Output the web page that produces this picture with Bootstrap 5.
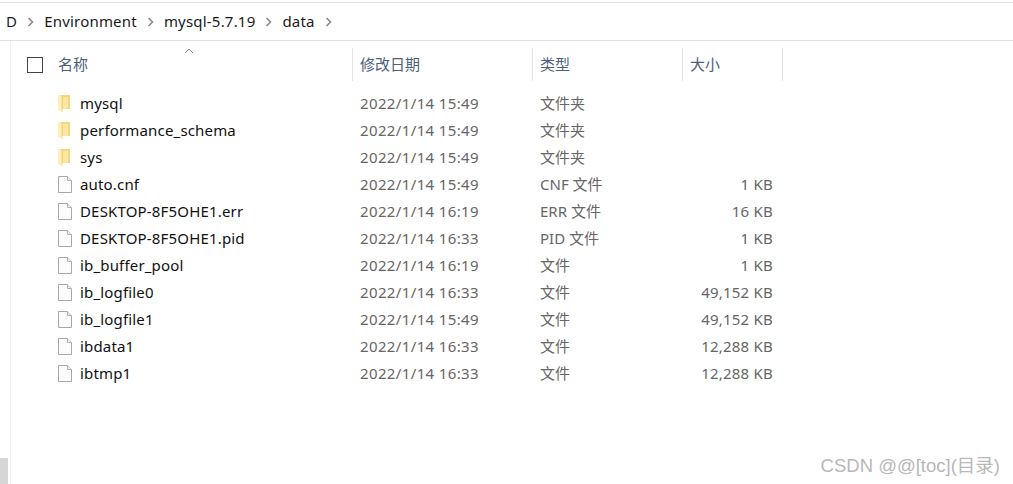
<!DOCTYPE html>
<html lang="zh-CN">
<head>
  <meta charset="UTF-8">
  <meta name="viewport" content="width=device-width, initial-scale=1">
  <title>data</title>
  <link href="https://cdn.jsdelivr.net/npm/bootstrap@5.3.0/dist/css/bootstrap.min.css" rel="stylesheet">
  <style>
    html, body { height: 100%; }
    body { background: #fff; overflow: hidden; font-family: "Noto Sans", "Noto Sans CJK SC", sans-serif; font-size: 15px; color: #1a1a1a; }
    .shell { height: 484px; position: relative; padding-top: 2px; }
    .crumbs { height: 39px; border-top: 1px solid #e3e3e3; border-bottom: 1px solid #e0e0e0; padding-left: 6px; gap: 10px; letter-spacing: .2px; }
    .crumb-sep { width: 7px; height: 10px; flex: none; }
    .pane { margin-left: 10px; border-left: 1px solid #f2f2f2; height: 443px; padding-top: 7px; }
    .head-row { height: 33px; color: #4c607a; }
    .head-box { width: 16px; height: 16px; border: 1px solid #444; margin-left: 16px; margin-right: 15px; flex: none; }
    .head-cell { height: 100%; border-right: 1px solid #e3e3e3; }
    .c-name { width: 342px; flex: none; }
    .c-date { width: 180px; flex: none; padding-left: 7px; }
    .c-type { width: 150px; flex: none; padding-left: 7px; }
    .c-size { width: 100px; flex: none; padding-left: 7px; }
    .rows { padding-top: 9px; }
    .file-row { height: 27px; }
    .file-row .c-name { padding-left: 47px; gap: 8px; color: #111; letter-spacing: .17px; }
    .file-row .c-date { color: #666; letter-spacing: .37px; }
    .file-row .c-type { color: #666; }
    .file-row .c-size { color: #666; padding-left: 0; padding-right: 10px; text-align: right; letter-spacing: .22px; }
    .ico { width: 14px; height: 17px; flex: none; }
    .sort-caret { position: absolute; left: 184px; top: 48px; width: 10px; height: 6px; }
    .scroll-stub { position: absolute; left: 0; top: 458px; width: 8px; height: 26px; background: #d6d6d6; }
    .mark-text { position: absolute; right: 13px; top: 452px; font-family: "Liberation Sans", "Noto Sans CJK SC", sans-serif; font-size: 18.5px; color: #b8b8b8; }
  </style>
</head>
<body>
  <svg width="0" height="0" class="d-block position-absolute">
    <defs>
      <symbol id="folder" viewBox="0 0 14 17">
        <path d="M2 0 H12 V14 H2 Z" fill="#f6d67e"/>
        <path d="M5 2 H10 V14 H5 Z" fill="#fbe6a4"/>
        <path d="M0 0 L4 1.5 V17 L0 14.5 Z" fill="#fdf0b8"/>
        <path d="M4 1.5 V17" stroke="#f0cd6c" stroke-width=".7"/>
      </symbol>
      <symbol id="doc" viewBox="0 0 14 17">
        <path d="M.5 .5 H9.5 L13.5 4.5 V16.5 H.5 Z" fill="#fcfcfc" stroke="#a8a8a8"/>
        <path d="M9.5 .5 V4.5 H13.5" fill="#eeeeee" stroke="#b0b0b0"/>
      </symbol>
      <symbol id="chev" viewBox="0 0 7 10">
        <path d="M1.5 1 L5.5 5 L1.5 9" fill="none" stroke="#8a8a8a" stroke-width="1.6"/>
      </symbol>
    </defs>
  </svg>

  <div class="shell">
    <div class="crumbs d-flex align-items-center">
      <span>D</span>
      <svg class="crumb-sep"><use href="#chev"/></svg>
      <span>Environment</span>
      <svg class="crumb-sep"><use href="#chev"/></svg>
      <span>mysql-5.7.19</span>
      <svg class="crumb-sep"><use href="#chev"/></svg>
      <span>data</span>
      <svg class="crumb-sep"><use href="#chev"/></svg>
    </div>

    <div class="pane">
      <div class="head-row d-flex">
        <div class="head-cell c-name d-flex align-items-center"><span class="head-box"></span>名称</div>
        <div class="head-cell c-date d-flex align-items-center">修改日期</div>
        <div class="head-cell c-type d-flex align-items-center">类型</div>
        <div class="head-cell c-size d-flex align-items-center">大小</div>
      </div>
      <div class="rows" id="rows"></div>
    </div>

    <svg class="sort-caret" viewBox="0 0 10 6"><path d="M1 5 L5 1 L9 5" fill="none" stroke="#8a8a8a"/></svg>
    <div class="scroll-stub"></div>
    <div class="mark-text">CSDN @@[toc](目录)</div>
  </div>

  <script>
    const files = [
      ['mysql', 'folder', '2022/1/14 15:49', '文件夹', ''],
      ['performance_schema', 'folder', '2022/1/14 15:49', '文件夹', ''],
      ['sys', 'folder', '2022/1/14 15:49', '文件夹', ''],
      ['auto.cnf', 'doc', '2022/1/14 15:49', 'CNF 文件', '1 KB'],
      ['DESKTOP-8F5OHE1.err', 'doc', '2022/1/14 16:19', 'ERR 文件', '16 KB'],
      ['DESKTOP-8F5OHE1.pid', 'doc', '2022/1/14 16:33', 'PID 文件', '1 KB'],
      ['ib_buffer_pool', 'doc', '2022/1/14 16:19', '文件', '1 KB'],
      ['ib_logfile0', 'doc', '2022/1/14 16:33', '文件', '49,152 KB'],
      ['ib_logfile1', 'doc', '2022/1/14 15:49', '文件', '49,152 KB'],
      ['ibdata1', 'doc', '2022/1/14 16:33', '文件', '12,288 KB'],
      ['ibtmp1', 'doc', '2022/1/14 16:33', '文件', '12,288 KB']
    ];
    document.getElementById('rows').innerHTML = files.map(f => `
      <div class="file-row d-flex align-items-center">
        <div class="c-name d-flex align-items-center"><svg class="ico"><use href="#${f[1]}"/></svg>${f[0]}</div>
        <div class="c-date">${f[2]}</div>
        <div class="c-type">${f[3]}</div>
        <div class="c-size">${f[4]}</div>
      </div>`).join('');
  </script>
  <script src="https://cdn.jsdelivr.net/npm/bootstrap@5.3.0/dist/js/bootstrap.bundle.min.js"></script>
</body>
</html>
